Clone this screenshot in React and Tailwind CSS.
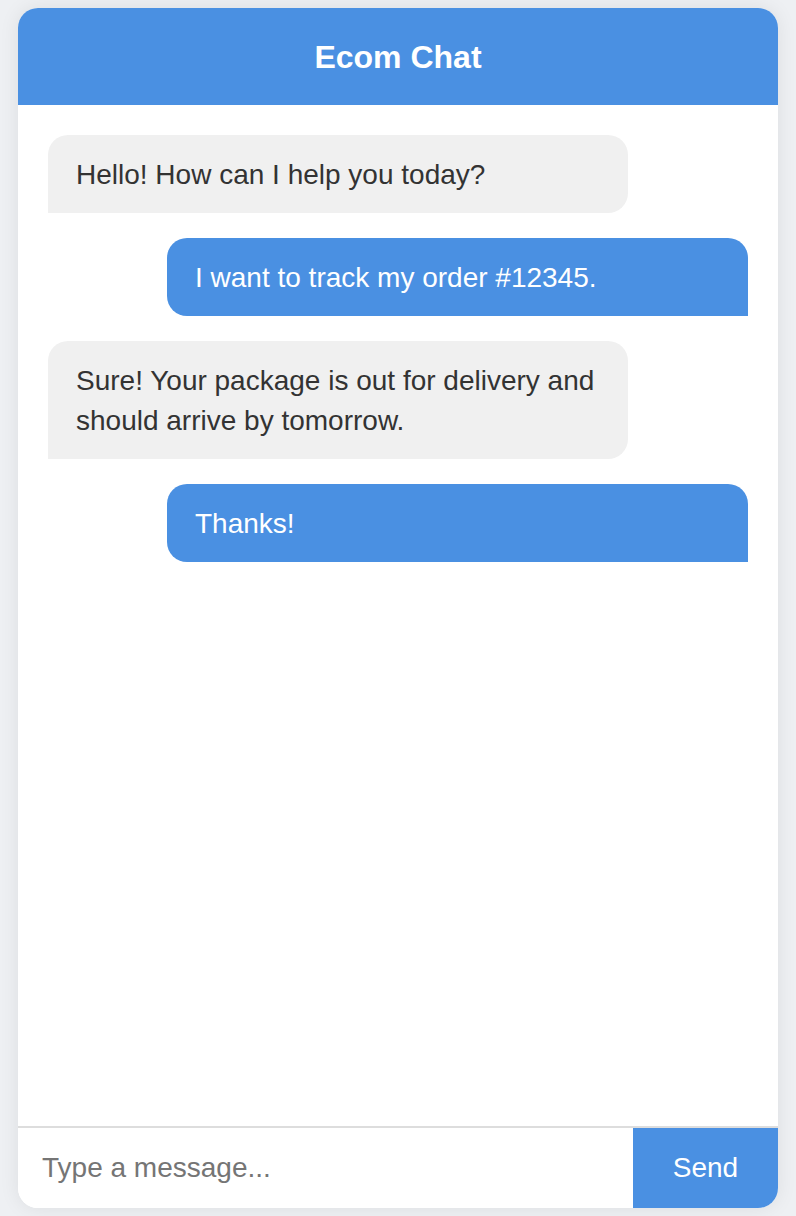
export default function App() {
  const font = { fontFamily: '"Liberation Sans", Arial, Helvetica, sans-serif' };
  const messages = [
    { from: "bot", text: "Hello! How can I help you today?" },
    { from: "user", text: "I want to track my order #12345." },
    { from: "bot", text: "Sure! Your package is out for delivery and should arrive by tomorrow." },
    { from: "user", text: "Thanks!" },
  ];
  return (
    <div className="min-h-screen bg-[#eef0f3] flex justify-center py-[8px]" style={font}>
      <div className="w-[760px] h-[1200px] bg-white rounded-[20px] overflow-hidden flex flex-col shadow-[0_0_20px_rgba(0,0,0,0.08)]">
        <div className="h-[97px] shrink-0 bg-[#4a90e2] flex items-center justify-center">
          <h1 className="text-white text-[32px] font-bold leading-none">Ecom Chat</h1>
        </div>
        <div className="flex-1 flex flex-col gap-[25px] pt-[30px] px-[30px]">
          {messages.map((m, i) =>
            m.from === "bot" ? (
              <div
                key={i}
                className="self-start w-[580px] bg-[#f0f0f0] text-[#333333] text-[28px] leading-[40px] px-[28px] pt-[20px] pb-[18px] rounded-[20px] rounded-bl-none"
              >
                {m.text}
              </div>
            ) : (
              <div
                key={i}
                className="self-end w-[581px] bg-[#4a90e2] text-white text-[28px] leading-[40px] px-[28px] pt-[20px] pb-[18px] rounded-[20px] rounded-br-none"
              >
                {m.text}
              </div>
            )
          )}
        </div>
        <div className="h-[82px] shrink-0 border-t-2 border-[#dddddd] flex">
          <input
            type="text"
            placeholder="Type a message..."
            className="flex-1 min-w-0 px-[24px] text-[28px] text-[#333333] placeholder:text-[#757575] outline-none bg-white"
            style={font}
          />
          <button className="w-[145px] bg-[#4a90e2] text-white text-[28px]" style={font}>
            Send
          </button>
        </div>
      </div>
    </div>
  );
}
